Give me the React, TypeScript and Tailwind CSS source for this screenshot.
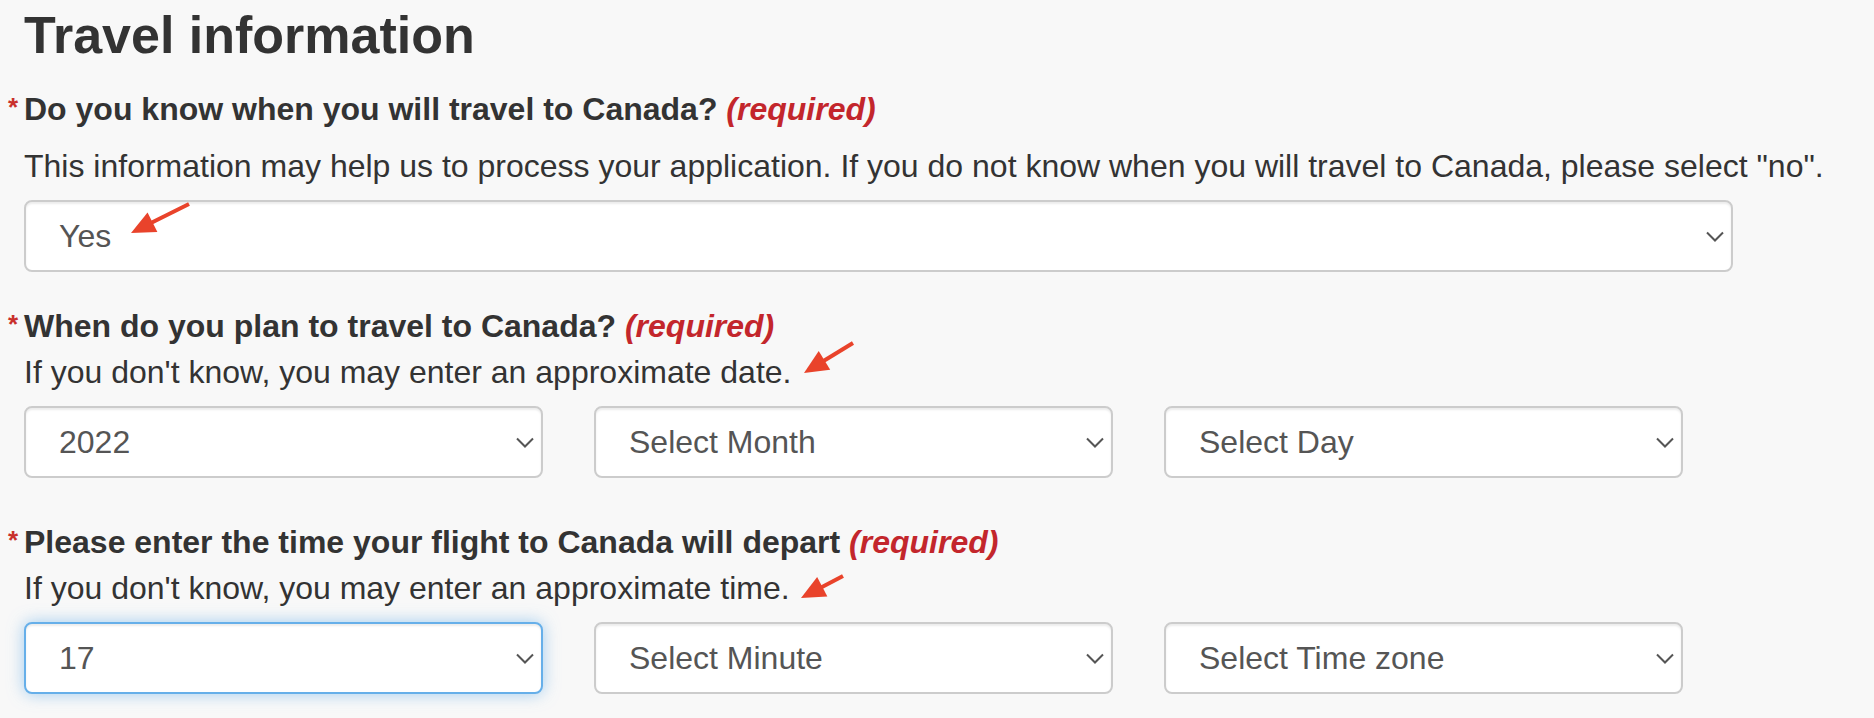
import React from "react";

type Pt = [number, number];

const arrows: { tail: Pt; tip: Pt }[] = [
  { tail: [189, 204], tip: [131, 233] },
  { tail: [853, 343], tip: [804, 373] },
  { tail: [843, 576], tip: [801, 598] },
];

function Arrow({ tail, tip }: { tail: Pt; tip: Pt }) {
  const dx = tip[0] - tail[0];
  const dy = tip[1] - tail[1];
  const len = Math.hypot(dx, dy);
  const ux = dx / len;
  const uy = dy / len;
  const bx = tip[0] - 24 * ux;
  const by = tip[1] - 24 * uy;
  const nx = -uy;
  const ny = ux;
  const pts = `${tip[0]},${tip[1]} ${bx + 11 * nx},${by + 11 * ny} ${bx - 11 * nx},${by - 11 * ny}`;
  return (
    <g>
      <line x1={tail[0]} y1={tail[1]} x2={bx + 4 * ux} y2={by + 4 * uy} stroke="#e9432b" strokeWidth={4} />
      <polygon points={pts} fill="#e9432b" />
    </g>
  );
}

function Chevron() {
  return (
    <svg width="18" height="11" viewBox="0 0 18 11" fill="none">
      <polyline points="1,1.5 9,9.5 17,1.5" stroke="#555" strokeWidth="2" />
    </svg>
  );
}

function Select({ value, focused, wide }: { value: string; focused?: boolean; wide?: boolean }) {
  return (
    <div
      className={
        "flex h-[72px] items-center justify-between rounded-[8px] border-2 bg-white pl-[33px] pr-[7px] text-[32px] text-[#555] " +
        (wide ? "w-[1709px] " : "w-[519px] ") +
        (focused
          ? "border-[#66afe9] shadow-[inset_0_2px_2px_rgba(0,0,0,0.075),0_0_16px_rgba(102,175,233,0.6)]"
          : "border-[#cccccc] shadow-[inset_0_2px_2px_rgba(0,0,0,0.075)]")
      }
    >
      <span className="leading-[40px]">{value}</span>
      <Chevron />
    </div>
  );
}

function Label({ text, className }: { text: string; className?: string }) {
  return (
    <div className={"-ml-[17px] flex text-[32px] font-bold leading-[40px] " + (className ?? "")}>
      <span className="relative -top-[2px] w-[17px] pl-[1px] text-[26px] text-[#c9302c]">*</span>
      <span>
        {text} <em className="text-[#c3262c]">(required)</em>
      </span>
    </div>
  );
}

export default function App() {
  return (
    <div className="relative min-h-screen bg-[#f8f8f8] font-['Liberation_Sans',Arial,sans-serif] text-[#333]">
      <div className="pl-[24px] pt-[5px]">
        <h2 className="text-[52px] font-bold leading-[60px]">Travel information</h2>

        <Label className="mt-[24px]" text="Do you know when you will travel to Canada?" />
        <p className="mt-[17px] text-[32px] leading-[40px]">
          This information may help us to process your application. If you do not know when you will travel to Canada, please select "no".
        </p>
        <div className="mt-[14px]">
          <Select wide value="Yes" />
        </div>

        <Label className="mt-[34px]" text="When do you plan to travel to Canada?" />
        <p className="mt-[6px] text-[32px] leading-[40px]">If you don't know, you may enter an approximate date.</p>
        <div className="mt-[14px] flex gap-[51px]">
          <Select value="2022" />
          <Select value="Select Month" />
          <Select value="Select Day" />
        </div>

        <Label className="mt-[44px]" text="Please enter the time your flight to Canada will depart" />
        <p className="mt-[6px] text-[32px] leading-[40px]">If you don't know, you may enter an approximate time.</p>
        <div className="mt-[14px] flex gap-[51px]">
          <Select value="17" focused />
          <Select value="Select Minute" />
          <Select value="Select Time zone" />
        </div>
      </div>

      <svg className="pointer-events-none absolute left-0 top-0" width="1874" height="718">
        {arrows.map((a, i) => (
          <Arrow key={i} tail={a.tail} tip={a.tip} />
        ))}
      </svg>
    </div>
  );
}
